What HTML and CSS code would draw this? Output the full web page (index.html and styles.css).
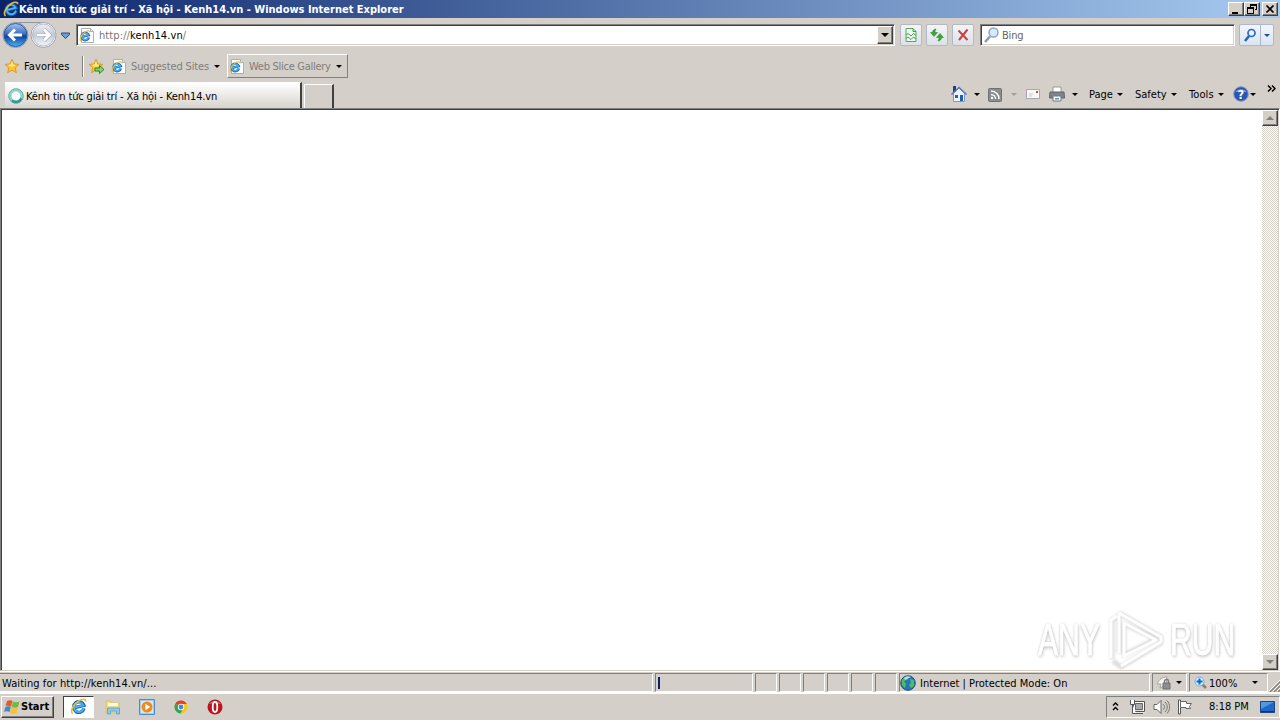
FILE: index.html
```html
<!DOCTYPE html>
<html lang="vi">
<head>
    <meta charset="UTF-8">
    <meta name="viewport" content="width=device-width, initial-scale=1.0">
    <title>Kênh tin tức giải trí - Xã hội - Kenh14.vn</title>
    <link rel="stylesheet" href="styles.css">
</head>
<body>

    <!-- shared icons -->
    <svg class="defs" width="0" height="0">
        <defs>
            <linearGradient id="blue" x1="0" y1="0" x2="0" y2="1">
                <stop offset="0" stop-color="#a9c4ea"/>
                <stop offset="0.45" stop-color="#3a6fc0"/>
                <stop offset="0.55" stop-color="#0d409c"/>
                <stop offset="1" stop-color="#4db4f4"/>
            </linearGradient>
            <linearGradient id="silver" x1="0" y1="0" x2="0" y2="1">
                <stop offset="0" stop-color="#eef0f4"/>
                <stop offset="0.5" stop-color="#c3cad8"/>
                <stop offset="1" stop-color="#f4f6fa"/>
            </linearGradient>
            <symbol id="ie" viewBox="0 0 16 16">
                <g transform="rotate(-14 8 8)">
                    <path d="M12.600 11A5 5 0 1 1 13.200 8.200H4.500" fill="none" stroke="#1c66b8" stroke-width="3.200"/>
                    <path d="M12.400 10.500A4.600 4.600 0 1 1 12.700 8H4.500" fill="none" stroke="#4fb4f0" stroke-width="1.600"/>
                </g>
                <path d="M2.600 14.800C-.5 12.500 3.500 5.500 8.500 2.500c3-1.800 6.300-2 6.300.8" fill="none" stroke="#f4bd2c" stroke-width="1.500"/>
            </symbol>
            <symbol id="iepage" viewBox="0 0 16 16">
                <path d="M2.500 1.500h9l3 3v11h-12z" fill="#fff" stroke="#a3b1c4"/>
                <path d="M11.500 1.500v3h3" fill="#dfe7f2" stroke="#a3b1c4"/>
                <use href="#ie" x="0" y="3" width="12" height="12"/>
            </symbol>
            <symbol id="star" viewBox="0 0 16 16">
                <path d="M8 1.300l2 4.700 5 .4-3.800 3.300 1.200 5L8 12.100l-4.400 2.600 1.200-5L1 6.400 6 6z" fill="#fcc62e" stroke="#dc9a2c"/>
                <path d="M8 3l1.200 3.500 2.800.5-3 1.500H6L4 7l2.500-.5z" fill="#ffe98a"/>
            </symbol>
        </defs>
    </svg>

    <div class="window">
        <div class="titlebar">
            <svg class="title-icon" width="16" height="16"><use href="#ie"/></svg>
            <span class="title-text">Kênh tin tức giải trí - Xã hội - Kenh14.vn - Windows Internet Explorer</span>
            <div class="caption-buttons">
                <div class="caption"><svg width="14" height="12"><path d="M3 9h6v2H3z"/></svg></div>
                <div class="caption"><svg width="14" height="12"><path d="M5 1h7v6h-2v-1h1V3H6v1H5zM2 4h7v7H2zM3 6v4h5V6z" fill-rule="evenodd"/></svg></div>
                <div class="caption close"><svg width="14" height="12"><path d="M3.500 2.500l7 7M10.500 2.500l-7 7" stroke="#000" stroke-width="1.700"/></svg></div>
            </div>
        </div>

        <div class="navbar">
            <svg class="back-forward" width="72" height="30" viewBox="0 0 72 30">
                <path d="M15 2.500h28" stroke="#8f98a8"/>
                <circle cx="15.500" cy="15" r="12.500" fill="#fff" stroke="#8792a8"/>
                <circle cx="15.500" cy="15" r="11.500" fill="url(#blue)" stroke="#2456a6"/>
                <path d="M9.500 15h12.500M15 9.500L9.500 15l5.500 5.500" fill="none" stroke="#fff" stroke-width="3"/>
                <circle cx="43.500" cy="15" r="12.500" fill="#fff" stroke="#9ba4b5"/>
                <circle cx="43.500" cy="15" r="11" fill="url(#silver)" stroke="#b5bcca"/>
                <path d="M37 15h12M44 9.500l5.500 5.500-5.500 5.500" fill="none" stroke="#a7aebb" stroke-width="4"/>
                <path d="M37 15h12M44 9.500l5.500 5.500-5.500 5.500" fill="none" stroke="#fff" stroke-width="2.600"/>
                <path d="M61.500 13h8v1.500l-4 4-4-4z" fill="#6aa0d8" stroke="#1f4c80"/>
            </svg>
            <div class="address">
                <svg width="16" height="16"><use href="#iepage"/></svg>
                <span class="url">http://<b>kenh14.vn</b>/</span>
                <div class="dropdown"><i class="arrow big"></i></div>
            </div>
            <div class="nav-button">
                <svg width="16" height="16" viewBox="0 0 16 16"><path d="M3 1.500h7l3 3v10H3z" fill="#f0faf0" stroke="#58a65c"/><path d="M10 1.500v3h3M3 8l2-1.500L8 9l2.500-2.500L13 8.500M3 11.500L5 10l3 2.500 2.500-2.500 2.500 2" fill="none" stroke="#3f9c48"/></svg>
            </div>
            <div class="nav-button">
                <svg width="16" height="16" viewBox="0 0 16 16"><path d="M7 2C5 2 3.500 3.500 3.500 5.500H1.500l3.500 4 3.500-4H6c0-1.500.3-2.500 1-3.500zM9 14c2 0 3.500-1.500 3.500-3.500h2l-3.500-4-3.500 4H10c0 1.500-.3 2.500-1 3.500z" fill="#3fa535" stroke="#267d25" stroke-width=".5"/></svg>
            </div>
            <div class="nav-button">
                <svg width="16" height="16" viewBox="0 0 16 16"><path d="M3.500 3.500l9 9.500M12.500 2.500L4 13" stroke="#cb4040" stroke-width="2"/></svg>
            </div>
            <div class="search">
                <svg width="16" height="16" viewBox="0 0 16 16"><path d="M6 9.500L1 15" stroke="#8b9aad" stroke-width="2.500"/><circle cx="9.500" cy="5.500" r="4.500" fill="#d6eafa" stroke="#8ea7c4" stroke-width="1.500"/></svg>
                <span class="search-text">Bing</span>
            </div>
            <div class="search-go">
                <div class="go"><svg width="14" height="14" viewBox="0 0 14 14"><path d="M6 8l-4 5" stroke="#2860bc" stroke-width="2.500"/><circle cx="8.500" cy="5" r="3.500" fill="#e9f4ff" stroke="#2868cc" stroke-width="1.700"/></svg></div>
                <div class="go-menu"><i class="arrow blue"></i></div>
            </div>
        </div>

        <div class="favbar">
            <svg width="16" height="16"><use href="#star"/></svg>
            <span class="fav-label">Favorites</span>
            <i class="separator"></i>
            <svg class="add-fav" width="18" height="16" viewBox="0 0 18 16"><use href="#star" width="16" height="16"/><path d="M7 10h4.500V7.500l4.500 4-4.500 4V13H7z" fill="#7fd664" stroke="#25812a" stroke-width=".9"/></svg>
            <svg class="suggested-icon" width="16" height="16"><use href="#iepage"/></svg>
            <span class="suggested">Suggested Sites</span>
            <i class="arrow"></i>
            <div class="webslice">
                <svg width="16" height="16"><use href="#iepage"/></svg>
                <span class="webslice-text">Web Slice Gallery</span>
                <i class="arrow"></i>
            </div>
        </div>

        <div class="tabrow">
            <div class="tab">
                <svg width="16" height="16" viewBox="0 0 16 16"><circle cx="8" cy="8" r="6" fill="#fff" stroke="#8fcfca" stroke-width="3"/><path d="M4 12.500a6 6 0 0 0 9.500-2" fill="none" stroke="#25988e" stroke-width="2.600"/><circle cx="8" cy="8" r="7.300" fill="none" stroke="#68aaa5" stroke-width=".8"/></svg>
                <span class="tab-text">Kênh tin tức giải trí - Xã hội - Kenh14.vn</span>
            </div>
            <div class="newtab"></div>
            <div class="commands">
                <svg class="home" width="18" height="18" viewBox="0 0 18 18"><path d="M3.500 8v8.500h11V8L9 3z" fill="#edf4fd" stroke="#7f9ac2"/><path d="M3 1h3v6H3z" fill="#223e8e"/><path d="M1.500 9.500L9 2.500l7.500 7" fill="none" stroke="#5b78b8" stroke-width="1.600"/><path d="M10 10h3v6h-3z" fill="#225da8"/><path d="M5 10h3v3H5z" fill="#315d99"/></svg>
                <i class="arrow"></i>
                <svg class="rss" width="14" height="14" viewBox="0 0 14 14"><rect x=".5" y=".5" width="13" height="13" rx="1" fill="#8c8c8c" stroke="#717171"/><path d="M3 6.500a4.500 4.500 0 0 1 4.500 4.500M3 3a8 8 0 0 1 8 8" fill="none" stroke="#fff" stroke-width="1.500"/><circle cx="4" cy="10" r="1.200" fill="#fff"/></svg>
                <i class="arrow faded"></i>
                <svg class="mail" width="14" height="11" viewBox="0 0 14 11"><path d="M.5.500h13v9H.5z" fill="#f8f7f8" stroke="#a9a6af"/><path d="M3 5h4M3 7h3" stroke="#c8c6ce"/><path d="M10 2h2v2h-2z" fill="#c8474b"/></svg>
                <svg class="printer" width="16" height="16" viewBox="0 0 16 16"><path d="M4 1h8v6H4z" fill="#fff" stroke="#999"/><path d="M1 6h14l.5 6H.5z" fill="#81858b" stroke="#5e6268"/><path d="M4 10h8v5H4z" fill="#f7fafd" stroke="#777"/><path d="M6 12h4v1.500H6z" fill="#4d9ad0"/></svg>
                <i class="arrow"></i>
                <span class="cmd page">Page</span><i class="arrow"></i>
                <span class="cmd safety">Safety</span><i class="arrow"></i>
                <span class="cmd tools">Tools</span><i class="arrow"></i>
                <svg class="help" width="16" height="16" viewBox="0 0 16 16"><circle cx="8" cy="8" r="7.300" fill="#2856b0" stroke="#8a9cc6"/><path d="M2.500 6a6 4.500 0 0 1 11 0z" fill="#7c9fdf"/><text x="8" y="12.500" text-anchor="middle" class="help-mark">?</text></svg>
                <i class="arrow"></i>
                <svg class="more" width="9" height="7" viewBox="0 0 9 7"><path d="M1 .5l3 3-3 3M5 .5l3 3-3 3" fill="none" stroke="#000" stroke-width="1.500"/></svg>
            </div>
        </div>

        <div class="content">
            <div class="page-area"></div>
            <div class="scrollbar">
                <div class="scroll-button"><i class="scroll-up"></i></div>
                <div class="scroll-button"><i class="scroll-down"></i></div>
            </div>
            <div class="watermark">
                <span class="any">ANY</span>
                <svg width="58" height="62" viewBox="0 0 58 62"><g class="play-shade"><path d="M5 50V11l6-3M12 4l42 24v6L14 58l-8-6M17 15v31l32-16zM12 4v40"/></g><g class="play-line"><path d="M4 49V11l6-4M12 4l42 24v5L14 57M17 14v33l32-16zM12 4v40"/></g></svg>
                <span class="run">RUN</span>
            </div>
        </div>

        <div class="statusbar">
            <div class="pane message"><span class="status-text">Waiting for http://kenh14.vn/...</span></div>
            <div class="pane progress"><i class="progress-chunk"></i></div>
            <div class="pane small"></div>
            <div class="pane small"></div>
            <div class="pane small"></div>
            <div class="pane small"></div>
            <div class="pane small"></div>
            <div class="pane small"></div>
            <div class="pane zone">
                <svg width="16" height="16" viewBox="0 0 16 16"><circle cx="8" cy="8" r="7.300" fill="#2674c0" stroke="#285079"/><path d="M2 5c2-4 6-4 7-3L7 5 4 6l2 3-1 4C2 11 1 8 2 5zM10 4l4 1v6l-3 2-2-3 2-2z" fill="#52bd54"/><path d="M4 3c2-2 5-2 7-1L5 5z" fill="#a6e7d5"/></svg>
                <span class="zone-text">Internet | Protected Mode: On</span>
            </div>
            <div class="pane privacy">
                <svg width="18" height="16" viewBox="0 0 18 16"><path d="M1 9C3 4 7 2 11 2l-1 8-6 3 1-4z" fill="#f4f4f4" stroke="#a5a5a5"/><path d="M7 8h7v6H7z" fill="#8e8e8e" stroke="#6e6e6e"/><path d="M8.500 8V6c0-2 4-2 4 0v2" fill="none" stroke="#777" stroke-width="1.300"/></svg>
                <i class="arrow"></i>
            </div>
            <div class="pane zoom">
                <svg width="14" height="14" viewBox="0 0 14 14"><path d="M8 8l4 4" stroke="#9a7a68" stroke-width="2.500"/><circle cx="5.500" cy="5.500" r="4.500" fill="#d9efff" stroke="#6db1e5"/><path d="M5.500 2.500v6M2.500 5.500h6" stroke="#1266c4" stroke-width="2"/></svg>
                <span class="zoom-text">100%</span>
                <i class="arrow"></i>
            </div>
            <svg class="grip" width="13" height="13" viewBox="0 0 13 13"><path d="M1 13L13 1M5 13l8-8M9 13l4-4" stroke="#858078" stroke-width="1.500"/><path d="M0 12L12 0M4 12l9-9M8 12l5-5" stroke="#fff"/></svg>
        </div>

        <div class="taskbar">
            <div class="start">
                <svg width="16" height="16" viewBox="0 0 16 16"><path d="M3 2c2-1 4-1 5.500 0L7 7.500C5 6.500 3 6.500 1.500 7z" fill="#e65a2a"/><path d="M9 2.500c2 1 4 1 6.500 0L14 8c-2 1-4 1-6.500 0z" fill="#79b83e"/><path d="M1.300 8c2-1 4-1 5.500 0L5.500 13c-2-1-4-1-5.500 0z" fill="#3f88d3"/><path d="M7.300 8.700c2 1 4 1 6.500 0L12.500 14c-2 1-4 1-6.500 0z" fill="#f6c132"/></svg>
                <span class="start-text">Start</span>
            </div>
            <div class="task-active"><svg width="17" height="17"><use href="#ie"/></svg></div>
            <svg class="explorer" width="16" height="16" viewBox="0 0 16 16"><path d="M1 2h5l1 2h7v10H1z" fill="#f2d98a" stroke="#dcc070"/><path d="M3 4h10v3H3z" fill="#fffbe2"/><path d="M2.500 15V9h12v6h-3v-3h-6v3z" fill="#8bc9ed" stroke="#65a9cf"/></svg>
            <svg class="player" width="16" height="16" viewBox="0 0 16 16"><path d="M.5.500h15v15H.5z" fill="#9fcdf0" stroke="#4d8cc5"/><path d="M2 2h12v12H2z" fill="#d4eafb"/><circle cx="8" cy="8" r="5.500" fill="#f08a1d"/><path d="M6.300 4.800l5 3.200-5 3.200z" fill="#fff"/></svg>
            <svg class="chrome" width="14" height="14" viewBox="0 0 14 14"><circle cx="7" cy="7" r="6.500" fill="#fbc816"/><path d="M7 7L1.300 3.800A6.500 6.500 0 0 1 12.700 4H7z" fill="#e0402f"/><path d="M7 7L1.300 3.800A6.500 6.500 0 0 0 6.500 13.500L9.500 8z" fill="#35a353"/><circle cx="7" cy="7" r="3.200" fill="#fff"/><circle cx="7" cy="7" r="2.400" fill="#4285e8"/></svg>
            <svg class="opera" width="16" height="16" viewBox="0 0 16 16"><circle cx="8" cy="8" r="7.500" fill="#b9161d"/><path d="M2 5a6.500 5 0 0 1 12 0z" fill="#d95155"/><ellipse cx="8" cy="8" rx="2.300" ry="5" fill="#b9161d" stroke="#fff" stroke-width="1.800"/></svg>
            <div class="tray">
                <svg class="chevrons" width="7" height="9" viewBox="0 0 7 9"><path d="M1 3.500l2.500-2.500L6 3.500M1 8l2.500-2.500L6 8" fill="none" stroke="#000" stroke-width="1.400"/></svg>
                <svg class="network" width="16" height="16" viewBox="0 0 16 16"><path d="M5 3.500h9.500v9H5z" fill="#b8b8b8" stroke="#fff" stroke-width="2"/><path d="M4.500 2.500h11v10h-11zM7 14.500h7" fill="none" stroke="#555"/><path d="M6.500 4.500h7v6h-7z" fill="#aaa" stroke="#666"/><path d="M1.500 1v4.500h4V1M3.500 5v9.500H7" fill="#fff" stroke="#555"/></svg>
                <svg class="volume" width="17" height="16" viewBox="0 0 17 16"><path d="M1 5.500h3l4-4v13l-4-4H1z" fill="#fff" stroke="#666"/><path d="M10 5c2 2 2 4 0 6M12 3c3 3 3 7 0 10M14 1.500c3.500 4 3.500 9 0 13" fill="none" stroke="#777"/></svg>
                <svg class="flag" width="16" height="16" viewBox="0 0 16 16"><path d="M1.500 1h2v14h-2z" fill="#fff" stroke="#555"/><path d="M3.500 2.500h6v2h5l-2 3 1 2H9v-1H3.500z" fill="#fff" stroke="#666"/></svg>
                <span class="clock">8:18 PM</span>
                <svg class="desktop" width="15" height="12" viewBox="0 0 15 12"><path d="M.5.500h14v11H.5z" fill="#1f68c8" stroke="#20477c"/><path d="M1 1h13L1 8z" fill="#4e99e6"/><path d="M1 10h13v1H1z" fill="#153568"/></svg>
            </div>
        </div>
    </div>

</body>
</html>
```

FILE: styles.css
```css
* {
    box-sizing: border-box;
}

body {
    margin: 0;
    background: #d4d0c8;
    font-family: "DejaVu Sans Condensed", "DejaVu Sans", sans-serif;
    font-size: 11px;
    font-stretch: condensed;
    color: #000;
    overflow: hidden;
}

svg {
    display: block;
    flex: none;
}

span {
    white-space: nowrap;
    flex: none;
}

.defs {
    position: absolute;
}

.window {
    display: flex;
    flex-direction: column;
    width: 1280px;
    height: 720px;
    background: #d4cfc8;
}

.titlebar {
    display: flex;
    align-items: center;
    height: 18px;
    padding: 0 2px 0 3px;
    background: linear-gradient(to right, #0a246a, #a6caf0);
}

.title-text {
    color: #fff;
    font-weight: bold;
    width: 400px;
    letter-spacing: -0.01px;
}

.caption-buttons {
    display: flex;
    margin-left: auto;
}

.caption {
    width: 16px;
    height: 14px;
    background: #d4d0c8;
    border: 1px solid;
    border-color: #fff #404040 #404040 #fff;
    box-shadow: inset -1px -1px #808080;
    overflow: hidden;
}

.caption.close {
    margin-left: 2px;
}

/* address and search */

.navbar {
    display: flex;
    align-items: center;
    height: 34px;
}

.back-forward {
    margin-right: 4px;
}

.address,
.search {
    display: flex;
    align-items: center;
    height: 22px;
    background: #fff;
    border: 1px solid;
    border-color: #808080 #fff #fff #808080;
    box-shadow: inset 1px 1px #404040, inset -1px -1px #d4d0c8;
}

.address {
    width: 819px;
    padding: 0 1px 0 2px;
    margin-right: 5px;
}

.url {
    margin-left: 4px;
    padding-top: 1px;
    color: #777;
    letter-spacing: 0.1px;
}

.url b {
    color: #000;
    font-weight: normal;
}

.dropdown {
    display: flex;
    align-items: center;
    justify-content: center;
    width: 16px;
    height: 18px;
    margin-left: auto;
    background: #d4d0c8;
    border: 1px solid;
    border-color: #fff #404040 #404040 #fff;
    box-shadow: inset -1px -1px #808080;
}

.arrow {
    flex: none;
    width: 0;
    height: 0;
    border: 3px solid transparent;
    border-top-color: #000;
    border-bottom: 0;
}

.arrow.big {
    border-width: 4px 4px 0;
}

.arrow.blue {
    border-top-color: #1e4e9b;
}

.arrow.faded {
    border-top-color: #a29e99;
}

.nav-button {
    display: flex;
    align-items: center;
    justify-content: center;
    width: 22px;
    height: 22px;
    margin-right: 4px;
    border: 1px solid #b3bac6;
    border-radius: 2px;
    background: linear-gradient(#f3f4f5, #dce2e8);
}

.search {
    width: 255px;
    margin-left: 2px;
    padding-left: 3px;
}

.search-text {
    margin-left: 2px;
    padding-top: 1px;
    color: #666;
    letter-spacing: -0.2px;
}

.search-go {
    display: flex;
    width: 35px;
    height: 22px;
    margin-left: 4px;
    border: 1px solid #aab9cf;
    border-radius: 2px;
    background: linear-gradient(#f2f6fb, #dae5f2);
}

.go,
.go-menu {
    display: flex;
    align-items: center;
    justify-content: center;
}

.go {
    width: 21px;
    border-right: 1px solid #aab9cf;
}

.go-menu {
    flex: 1;
}

/* favorites */

.favbar {
    display: flex;
    align-items: center;
    height: 28px;
    padding-left: 4px;
}

.fav-label {
    width: 46px;
    margin-left: 4px;
    letter-spacing: 0.1px;
}

.separator {
    width: 2px;
    height: 21px;
    margin-left: 12px;
    border-left: 1px solid #808080;
    border-right: 1px solid #fff;
}

.add-fav {
    margin-left: 4px;
}

.suggested-icon {
    margin-left: 5px;
}

.suggested,
.webslice-text {
    padding-top: 1px;
    color: #817e79;
}

.suggested {
    width: 79px;
    margin: 0 4px;
    letter-spacing: -0.12px;
}

.webslice {
    display: flex;
    align-items: center;
    width: 121px;
    height: 24px;
    margin-left: 7px;
    padding-left: 1px;
    border: 1px solid;
    border-color: #fff #808080 #808080 #fff;
}

.webslice-text {
    width: 82px;
    margin: 0 5px 0 4px;
    letter-spacing: -0.28px;
}

/* tabs and command bar */

.tabrow {
    display: flex;
    height: 28px;
    padding: 2px 0 0 5px;
}

.tab {
    display: flex;
    align-items: center;
    width: 297px;
    height: 26px;
    padding-left: 3px;
    border-right: 2px solid #404040;
    border-top: 1px solid #fff;
    background: linear-gradient(#fff, #d8d4cd);
}

.tab-text {
    margin-left: 2px;
    padding-top: 1px;
    letter-spacing: -0.15px;
}

.newtab {
    width: 30px;
    height: 24px;
    margin: 2px 0 0 2px;
    border: 1px solid #fff;
    border-right: 2px solid #404040;
    border-bottom: 0;
}

.commands {
    display: flex;
    align-items: center;
    height: 24px;
    margin-left: 616px;
}

.home {
    margin-right: 6px;
}

.rss {
    margin: 2px 9px 0 8px;
}

.mail {
    margin: 0 9px;
}

.printer {
    margin-right: 7px;
}

.cmd {
    margin-right: 4px;
}

.page {
    width: 24px;
    margin-left: 11px;
}

.safety {
    width: 32px;
    margin-left: 12px;
}

.tools {
    width: 25px;
    margin-left: 12px;
    letter-spacing: 0.1px;
}

.help {
    margin: 0 1px 0 9px;
}

.help-mark {
    fill: #fff;
    font-size: 12px;
    font-weight: bold;
}

.more {
    margin: 0 0 12px 11px;
}

/* browser view */

.content {
    position: relative;
    display: flex;
    height: 563px;
    border: 1px solid;
    border-color: #808080 #fff #d4d0c8 #808080;
    box-shadow: inset 1px 1px #404040;
    padding: 1px 1px 0 1px;
}

.page-area {
    flex: 1;
    background: #fff;
}

.scrollbar {
    display: flex;
    flex-direction: column;
    justify-content: space-between;
    width: 16px;
    background: repeating-conic-gradient(#fff 0 25%, #d4d0c8 0 50%) 0 0 / 2px 2px;
}

.scroll-button {
    display: flex;
    align-items: center;
    justify-content: center;
    height: 16px;
    background: #d4d0c8;
    border: 1px solid;
    border-color: #fff #404040 #404040 #fff;
    box-shadow: inset -1px -1px #808080;
}

.scroll-up,
.scroll-down {
    border: 4px solid transparent;
}

.scroll-up {
    border-bottom-color: #808080;
    border-top: 0;
}

.scroll-down {
    border-top-color: #808080;
    border-bottom: 0;
}

.watermark {
    position: absolute;
    left: 1037px;
    top: 500px;
    display: flex;
    align-items: center;
    height: 62px;
    color: #fff;
    font-family: "Liberation Sans Narrow", "Liberation Sans", sans-serif;
    font-size: 45px;
    -webkit-text-stroke: 1px #fff;
    text-shadow: 0 0 3px #b4b4b4, 1px 2px 4px #c4c4c4;
}

.any,
.run {
    width: 66px;
    transform: scaleX(0.67);
    transform-origin: left;
}

.watermark svg {
    margin: 0 5px 0 3px;
}

.play-shade,
.play-line {
    fill: none;
    stroke-linejoin: round;
}

.play-shade {
    stroke: #dedede;
    stroke-width: 5px;
    filter: blur(1px);
}

.play-line {
    stroke: #fff;
    stroke-width: 3px;
}

/* status bar */

.statusbar {
    display: flex;
    height: 22px;
    padding-top: 1px;
    border-top: 1px solid #fff;
    border-bottom: 1px solid #fff;
}

.pane {
    display: flex;
    align-items: center;
    flex: none;
    height: 19px;
    margin-right: 2px;
    border: 1px solid;
    border-color: #808080 #fff #fff #808080;
}

.pane span {
    padding-top: 1px;
}

.message {
    width: 653px;
    border-left: 0;
}

.progress {
    width: 98px;
    padding-left: 2px;
}

.progress-chunk {
    width: 2px;
    height: 12px;
    background: #0a246a;
}

.status-text {
    margin-left: 2px;
    letter-spacing: 0.08px;
}

.small {
    width: 22px;
}

.zone {
    width: 251px;
}

.zone-text {
    margin-left: 4px;
    letter-spacing: 0.02px;
}

.privacy {
    width: 35px;
    padding-left: 3px;
}

.privacy .arrow {
    margin-left: 2px;
}

.zoom {
    width: 79px;
    padding-left: 4px;
}

.zoom-text {
    width: 30px;
    margin: 0 13px 0 1px;
}

.grip {
    margin: 6px 0 0 -1px;
}

/* taskbar */

.taskbar {
    display: flex;
    align-items: center;
    height: 26px;
    padding: 1px 0 1px 1px;
    border-top: 1px solid #fff;
}

.start {
    display: flex;
    align-items: center;
    width: 53px;
    height: 22px;
    padding-left: 2px;
    border: 1px solid;
    border-color: #fff #404040 #404040 #fff;
    box-shadow: inset -1px -1px #808080;
}

.start-text {
    margin-left: 1px;
    font-weight: bold;
}

.task-active {
    display: flex;
    align-items: center;
    justify-content: center;
    width: 31px;
    height: 22px;
    margin-left: 9px;
    background: #fff;
    border: 1px solid;
    border-color: #404040 #fff #fff #404040;
}

.explorer {
    margin-left: 11px;
}

.player {
    margin-left: 18px;
}

.chrome {
    margin-left: 19px;
}

.opera {
    margin-left: 19px;
}

.tray {
    display: flex;
    align-items: center;
    width: 174px;
    height: 22px;
    margin-left: auto;
    padding-left: 5px;
    border: 1px solid;
    border-color: #808080 #fff #fff #808080;
}

.network {
    margin-left: 10px;
}

.volume {
    margin-left: 8px;
}

.flag {
    margin-left: 7px;
}

.clock {
    width: 40px;
    margin-left: 16px;
}

.desktop {
    margin-left: 11px;
}
```
